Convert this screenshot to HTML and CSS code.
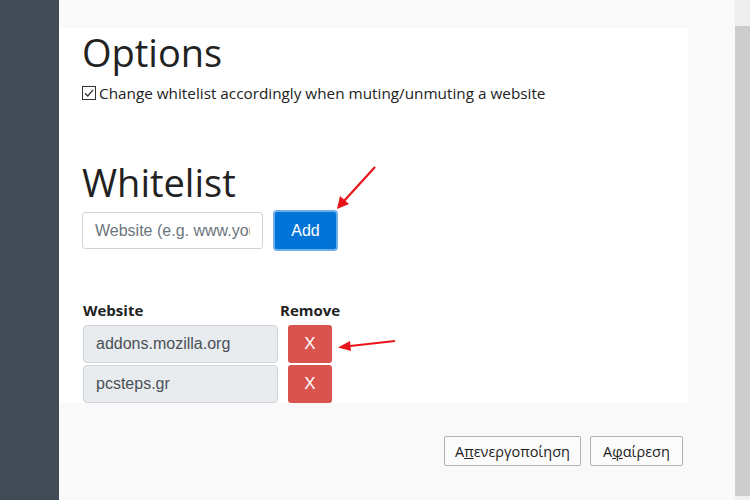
FILE: index.html
```html
<!DOCTYPE html>
<html>
<head>
<meta charset="utf-8">
<link rel="stylesheet" href="styles.css">
</head>
<body>
<div class="app">
  <aside class="sidebar"></aside>
  <main class="main">
    <section class="panel">
      <h1 class="title">Options</h1>
      <label class="check"><span class="box"><svg width="14" height="14" viewBox="0 0 14 14"><rect x="0.5" y="0.5" width="13" height="13" fill="#fff" stroke="#333" stroke-width="1"/><path d="M3 7.2 L5.8 10 L11 3.8" fill="none" stroke="#333" stroke-width="1.3"/></svg></span>Change whitelist accordingly when muting/unmuting a website</label>
      <h1 class="title title-wl">Whitelist</h1>
      <div class="add-row">
        <input class="site-input" type="text" placeholder="Website (e.g. www.youtube.com)">
        <button class="btn-add">Add</button>
      </div>
      <div class="table">
        <div class="th">Website</div>
        <div class="th th-remove">Remove</div>
        <div class="cell">addons.mozilla.org</div>
        <button class="btn-x">X</button>
        <div class="cell">pcsteps.gr</div>
        <button class="btn-x">X</button>
      </div>
    </section>
    <footer class="footer">
      <button class="btn-plain btn-disable">A<u>π</u>ενεργοποίηση</button>
      <button class="btn-plain btn-remove">A<u>φ</u>αίρεση</button>
    </footer>
    <svg class="arrows" width="750" height="500" viewBox="0 0 750 500">
      <line x1="375" y1="167" x2="344" y2="201" stroke="#e8141b" stroke-width="2.2"/>
      <polygon points="337,209 340,196 349,204" fill="#e8141b"/>
      <line x1="395" y1="341" x2="350" y2="346" stroke="#e8141b" stroke-width="2.2"/>
      <polygon points="338,347.5 350,341 351,351" fill="#e8141b"/>
    </svg>
  </main>
  <div class="scrollbar"><div class="sb-top"></div><div class="sb-thumb"></div></div>
</div>
</body>
</html>
```
FILE: styles.css
```css
html, body {
  margin: 0;
  padding: 0;
  width: 750px;
  height: 500px;
  overflow: hidden;
}
.app {
  display: flex;
  height: 500px;
}
.sidebar {
  width: 59px;
  flex: none;
  background: #424c57;
}
.main {
  flex: 1;
  background: #f9f9fa;
  padding-top: 28px;
  font-family: "Open Sans", sans-serif;
  color: #222;
}
.arrows {
  position: absolute;
  left: 0;
  top: 0;
  pointer-events: none;
}
.panel {
  width: 629px;
  height: 375px;
  background: #fff;
  padding-left: 23px;
  box-sizing: border-box;
}
.title {
  margin: 0;
  font-weight: 400;
  font-size: 38px;
  line-height: 48px;
  color: #222;
}
.check {
  display: flex;
  align-items: center;
  gap: 3px;
  font-size: 15.3px;
  line-height: 22px;
  margin-top: 6px;
  color: #222;
}
.box {
  display: flex;
  width: 14px;
  height: 14px;
}
.title-wl {
  margin-top: 54px;
}
.add-row {
  display: flex;
  align-items: center;
  gap: 10px;
  margin-top: 4px;
}
.site-input {
  width: 181px;
  height: 37px;
  box-sizing: border-box;
  border: 1px solid #ced4da;
  border-radius: 3px;
  padding: 0 12px;
  font-family: "Liberation Sans", Arial, sans-serif;
  font-size: 16px;
  color: #495057;
}
.site-input::placeholder {
  color: #6c757d;
}
.btn-add {
  width: 65px;
  height: 41px;
  box-sizing: border-box;
  background: #0274d7;
  border: 2px solid #6fb0ea;
  border-radius: 4px;
  color: #fff;
  font-family: "Liberation Sans", Arial, sans-serif;
  font-size: 16px;
  padding: 0;
}
.table {
  display: grid;
  grid-template-columns: 195px 44px;
  column-gap: 10px;
  row-gap: 2px;
  margin-top: 49px;
  margin-left: 1px;
}
.th {
  font-weight: 700;
  font-size: 15px;
  line-height: 20px;
  margin-bottom: 3px;
  color: #222;
}
.th-remove {
  margin-left: -8px;
}
.cell {
  height: 38px;
  box-sizing: border-box;
  background: #e9ecef;
  border: 1px solid #ced4da;
  border-radius: 4px;
  padding: 0 12px;
  display: flex;
  align-items: center;
  font-family: "Liberation Sans", Arial, sans-serif;
  font-size: 16px;
  color: #495057;
}
.btn-x {
  height: 38px;
  width: 44px;
  background: #d9534f;
  border: 0;
  border-radius: 3px;
  color: #fff;
  font-family: "Liberation Sans", Arial, sans-serif;
  font-size: 17px;
  padding: 0;
}
.footer {
  display: flex;
  justify-content: flex-end;
  gap: 9px;
  width: 624px;
  margin-top: 33px;
}
.btn-plain {
  height: 30px;
  box-sizing: border-box;
  background: #fbfbfb;
  border: 1px solid #b1b1b1;
  border-radius: 2px;
  font-family: "Open Sans", sans-serif;
  font-size: 14.5px;
  color: #222;
  padding: 0;
  text-align: center;
}
.btn-disable {
  width: 137px;
}
.btn-remove {
  width: 93px;
}
.btn-plain u {
  text-decoration-thickness: 1px;
}
.scrollbar {
  width: 15px;
  flex: none;
  display: flex;
  flex-direction: column;
  background: #f0f0f0;
}
.sb-top {
  height: 26px;
  background: #efeeef;
}
.sb-thumb {
  height: 470px;
  background: #cdcdcd;
}
```
